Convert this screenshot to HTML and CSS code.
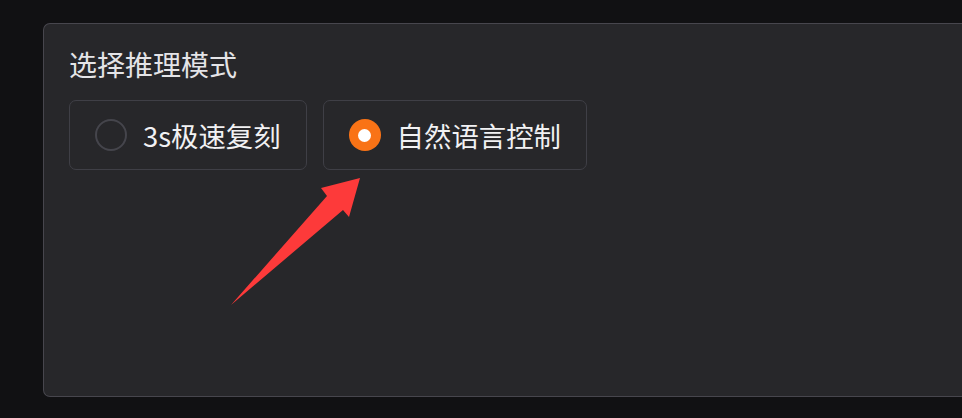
FILE: index.html
```html
<!DOCTYPE html>
<html lang="zh-CN">
<head>
<meta charset="utf-8">
<title>选择推理模式</title>
<link rel="stylesheet" href="styles.css">
</head>
<body>
<div class="page">
  <section class="panel">
    <div class="title">选择推理模式</div>
    <div class="options">
      <label class="option">
        <span class="radio"></span>
        <span class="label">3s极速复刻</span>
      </label>
      <label class="option">
        <span class="radio checked"></span>
        <span class="label">自然语言控制</span>
      </label>
    </div>
  </section>
  <svg class="arrow" width="962" height="418" viewBox="0 0 962 418">
    <polygon points="360,178 321,188 327,196 231,305 343,210 349,217" fill="#fd3a3a"/>
  </svg>
</div>
</body>
</html>
```
FILE: styles.css
```css
html, body {
  margin: 0;
  padding: 0;
  background: #111113;
  overflow: hidden;
}
.page {
  position: relative;
  width: 962px;
  height: 418px;
  padding-top: 23px;
  padding-left: 43px;
  box-sizing: border-box;
  display: flex;
  align-items: flex-start;
  font-family: "Noto Sans CJK SC", "Noto Sans", sans-serif;
}
.panel {
  flex: 1;
  height: 374px;
  box-sizing: border-box;
  background: #27272a;
  border: 1.5px solid #47464d;
  border-right: none;
  border-radius: 7px 0 0 7px;
  padding: 20px 25px;
}
.title {
  color: #e4e4e7;
  font-size: 28px;
  line-height: 40px;
}
.options {
  display: flex;
  gap: 16px;
  margin-top: 16px;
}
.option {
  display: flex;
  align-items: center;
  gap: 16px;
  height: 70px;
  box-sizing: border-box;
  padding: 0 25px 0 25px;
  border: 1.5px solid #3f3f46;
  border-radius: 7px;
  color: #f1f1f3;
  font-size: 27.4px;
}
.radio {
  width: 32px;
  height: 32px;
  box-sizing: border-box;
  border-radius: 50%;
  border: 2px solid #45454c;
  flex: none;
}
.radio.checked {
  border: none;
  background: #f97316;
  display: flex;
  align-items: center;
  justify-content: center;
}
.radio.checked::after {
  content: "";
  width: 13px;
  height: 13px;
  border-radius: 50%;
  background: #ffffff;
}
.arrow {
  position: absolute;
  left: 0;
  top: 0;
  pointer-events: none;
}
```
